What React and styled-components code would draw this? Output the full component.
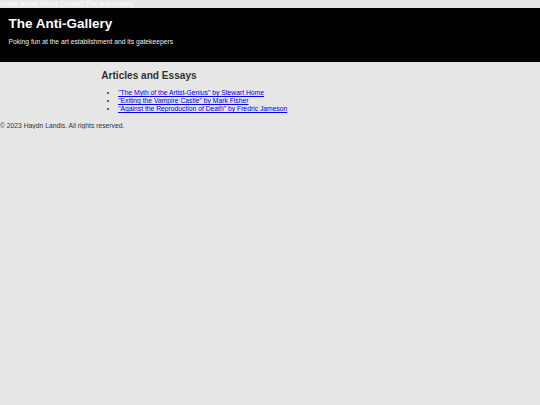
import React from "react";
import styled, { createGlobalStyle } from "styled-components";

const Global = createGlobalStyle`
  html, body { margin: 0; padding: 0; background: #e6e6e6; }
  body { font-family: "Liberation Sans", Arial, sans-serif; }
`;

const Nav = styled.nav`
  height: 7.5px;
  display: flex;
  gap: 1.9px;
  font-size: 6.75px;
  line-height: 7.5px;
  color: #fff;
  background: #e6e6e6;
`;

const NavLink = styled.a`
  color: #fff;
  text-decoration: none;
`;

const Header = styled.header`
  background: #000;
  color: #fff;
  padding: 8.4px 8.4px 9.4px;
`;

const Title = styled.h1`
  margin: 0;
  font-size: 13.5px;
  font-weight: bold;
`;

const Tagline = styled.p`
  margin: 7.5px 0 6.75px;
  font-size: 6.75px;
  color: #eee;
`;

const Main = styled.main`
  max-width: 337.5px;
  margin: 0 auto;
  padding: 0 0 0.1px;
`;

const Heading = styled.h2`
  margin: 8.4px 0;
  font-size: 10.1px;
  color: #333;
`;

const List = styled.ul`
  margin: 5.75px 0 6.75px;
  padding-left: 16.9px;
  font-size: 6.75px;
  line-height: 8px;
  color: #333;
`;

const Link = styled.a`
  color: #0000ee;
`;

const Footer = styled.footer`
  font-size: 6.75px;
  color: #333;
  padding-top: 2px;
`;

const articles = [
  '"The Myth of the Artist-Genius" by Stewart Home',
  '"Exiting the Vampire Castle" by Mark Fisher',
  '"Against the Reproduction of Death" by Fredric Jameson',
];

export default function App() {
  return (
    <>
      <Global />
      <Nav>
        <NavLink href="#">Home</NavLink>
        <NavLink href="#">About</NavLink>
        <NavLink href="#">Works</NavLink>
        <NavLink href="#">Contact</NavLink>
        <NavLink href="#">The Anti-Gallery</NavLink>
      </Nav>
      <Header>
        <Title>The Anti-Gallery</Title>
        <Tagline>Poking fun at the art establishment and its gatekeepers</Tagline>
      </Header>
      <Main>
        <Heading>Articles and Essays</Heading>
        <List>
          {articles.map((t) => (
            <li key={t}>
              <Link href="#">{t}</Link>
            </li>
          ))}
        </List>
      </Main>
      <Footer>&copy; 2023 Haydn Landis. All rights reserved.</Footer>
    </>
  );
}
